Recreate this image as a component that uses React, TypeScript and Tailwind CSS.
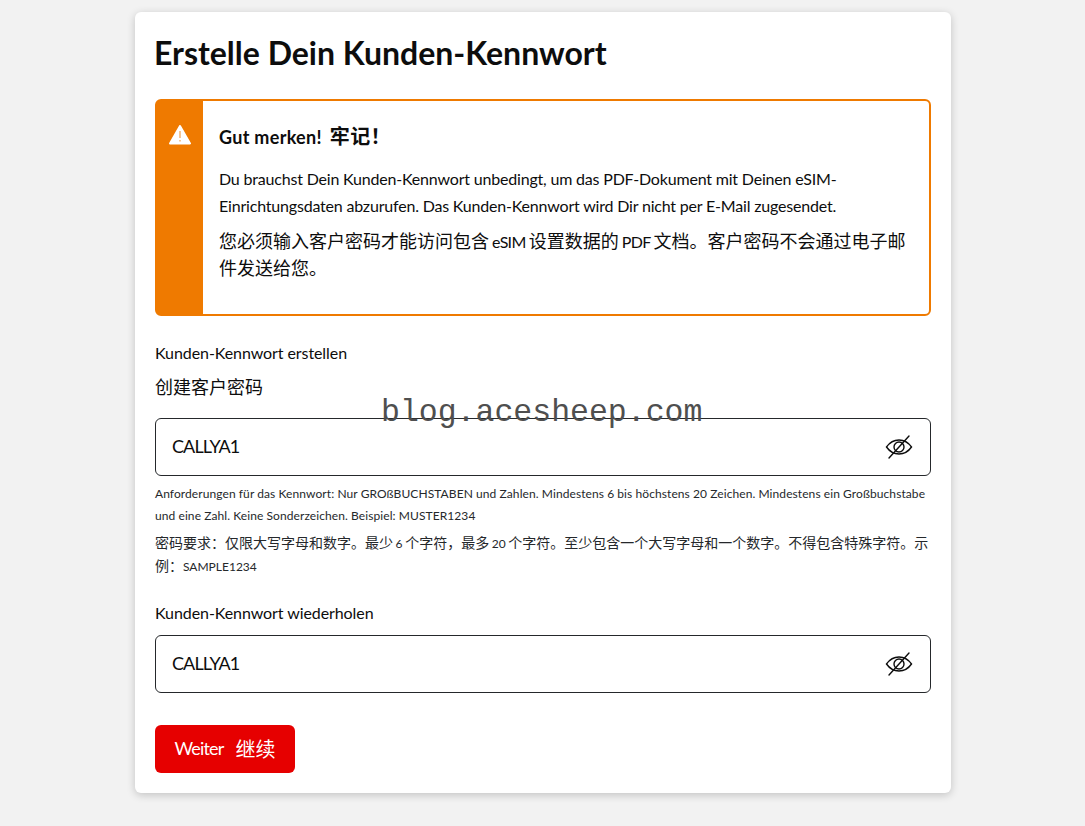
import React from "react";

const font = { fontFamily: "Lato, 'Noto Sans CJK SC', sans-serif" };

const EyeOff = () => (
  <svg width="28" height="26" viewBox="0 0 28 26" fill="none" stroke="#0d0d0d" strokeWidth="1.4" strokeLinecap="round">
    <path d="M1.5 13C5 8 9 6 14 6s9 2 12.5 7C23 18 19 20 14 20S5 18 1.5 13Z" />
    <circle cx="14" cy="13" r="5" />
    <path d="M24 2 4 24" />
  </svg>
);

const PasswordField = ({ value }: { value: string }) => (
  <div className="flex items-center justify-between h-[58px] border border-[#25282b] rounded-[6px] pl-4 pr-[17px] bg-white">
    <span className="pb-[2px] text-[18px] tracking-[-0.9px] text-[#0d0d0d]">{value}</span>
    <EyeOff />
  </div>
);

const Latin = ({ children }: { children: React.ReactNode }) => (
  <span className="text-[16px] tracking-[-0.7px]">{children}</span>
);

const Small = ({ children }: { children: React.ReactNode }) => (
  <span className="text-[12px]">{children}</span>
);

export default function App() {
  return (
    <div className="min-h-[826px] bg-[#f2f2f2] pt-3 pb-[33px]" style={font}>
      <div className="relative w-[816px] h-[781px] ml-[135px] bg-white rounded-[6px] shadow-[0_2px_8px_rgba(0,0,0,0.2)] px-5 pt-5">
        <h1 className="text-[32px] leading-[42px] font-bold text-[#0d0d0d] -ml-px">Erstelle Dein Kunden-Kennwort</h1>

        <div className="flex h-[217px] mt-[25px] border-2 border-[#ef7a00] rounded-[6px]">
          <div className="w-[46px] shrink-0 bg-[#ef7a00] flex justify-center pt-[24px]">
            <svg width="22" height="20" viewBox="0 0 22 20">
              <path d="M11 1 21 18.5H1Z" fill="#fff" stroke="#fff" strokeWidth="2" strokeLinejoin="round" />
              <path d="M11 6v7M11 15v1.6" stroke="#f4b77a" strokeWidth="1.6" />
            </svg>
          </div>
          <div className="flex-1 pl-4 pr-5 pt-[21px] text-[#0d0d0d]">
            <p className="text-[18px] leading-[28px] font-bold tracking-[0.3px]">
              Gut merken!<span className="ml-2 text-[20px]">牢记！</span>
            </p>
            <p className="mt-[14px] text-[16px] leading-[27px] tracking-[-0.19px]">
              Du brauchst Dein Kunden-Kennwort unbedingt, um das PDF-Dokument mit Deinen eSIM-Einrichtungsdaten abzurufen. Das Kunden-Kennwort wird Dir nicht per E-Mail zugesendet.
            </p>
            <p className="mt-[9px] text-[18px] leading-[27px] [word-spacing:-1.5px]">
              您必须输入客户密码才能访问包含 <Latin>eSIM</Latin> 设置数据的 <Latin>PDF</Latin> 文档。客户密码不会通过电子邮件发送给您。
            </p>
          </div>
        </div>

        <p className="mt-[25px] text-[16px] leading-[24px] tracking-[-0.08px] text-[#0d0d0d]">Kunden-Kennwort erstellen</p>
        <p className="mt-[10px] text-[18px] leading-[24px] text-[#0d0d0d]">创建客户密码</p>
        <div className="mt-[19px]">
          <PasswordField value="CALLYA1" />
        </div>
        <p className="mt-[7px] text-[12px] leading-[22px] tracking-[0.08px] text-[#25282b]">
          Anforderungen für das Kennwort: Nur GROßBUCHSTABEN und Zahlen. Mindestens 6 bis höchstens 20 Zeichen. Mindestens ein Großbuchstabe und eine Zahl. Keine Sonderzeichen. Beispiel: MUSTER1234
        </p>
        <p className="mt-[5px] text-[14px] leading-[22px] [word-spacing:-1px] text-[#25282b]">
          密码要求：仅限大写字母和数字。最少 <Small>6</Small> 个字符，最多 <Small>20</Small> 个字符。至少包含一个大写字母和一个数字。不得包含特殊字符。示例：<Small>SAMPLE1234</Small>
        </p>

        <p className="mt-[23px] text-[16px] leading-[24px] tracking-[-0.08px] text-[#0d0d0d]">Kunden-Kennwort wiederholen</p>
        <div className="mt-[10px]">
          <PasswordField value="CALLYA1" />
        </div>

        <button className="mt-8 h-[48px] w-[140px] bg-[#e60000] rounded-[6px] text-white text-[18px] flex items-center justify-center gap-[12px]">
          <span className="pb-px tracking-[-0.8px]">Weiter</span>
          <span className="pb-px text-[20px]">继续</span>
        </button>

        <div
          className="absolute left-[246px] top-[381px] text-[31.5px] leading-[40px] text-[#4f4f4f]"
          style={{ fontFamily: "'Liberation Mono', monospace" }}
        >
          blog.acesheep.com
        </div>
      </div>
    </div>
  );
}
